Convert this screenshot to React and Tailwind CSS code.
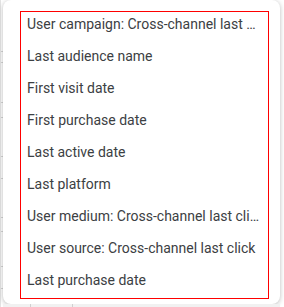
import React from 'react';

const items = [
    'User campaign: Cross-channel last click',
    'Last audience name',
    'First visit date',
    'First purchase date',
    'Last active date',
    'Last platform',
    'User medium: Cross-channel last click',
    'User source: Cross-channel last click',
    'Last purchase date',
];

// faint table rules peeking out behind the menu on the left
const rules = [52, 11, 40, 15, 39, 22, 39, 14, 35, 22];

export default function App() {
    return (
        <div className="w-[284px] h-[307px] bg-white overflow-hidden flex" style={{ fontFamily: 'Roboto, "Liberation Sans", sans-serif' }}>
            <div className="w-[3px] shrink-0 flex flex-col border-l border-[#e3e3e3]">
                {rules.map((h, i) => (
                    <div key={i} className="shrink-0 border-b border-[#d6d6d6]" style={{ height: h }} />
                ))}
            </div>
            <div className="flex flex-col">
                <div className="w-[277px] h-[304px] bg-white rounded-[8px] shadow-[0_1px_5px_rgba(0,0,0,0.28)] pt-[11px] pl-[17px]">
                    <div className="w-[249px] h-[288px] border border-[#ff0000] pt-[2px] pl-[6px] pr-[7px] flex flex-col gap-[12px]">
                        {items.map((label) => (
                            <div key={label} className="h-[20px] leading-[20px] text-[14px] text-[#3c4043] truncate">
                                {label}
                            </div>
                        ))}
                    </div>
                </div>
                <div className="h-[3px] flex">
                    <div className="w-[28px] border-r border-[#d0d0d0] bg-[#f1f1f1]" />
                    <div className="w-[42px] border-r border-[#d0d0d0] bg-[#f1f1f1]" />
                    <div className="flex-1 bg-[#f1f1f1]" />
                </div>
            </div>
        </div>
    );
}
